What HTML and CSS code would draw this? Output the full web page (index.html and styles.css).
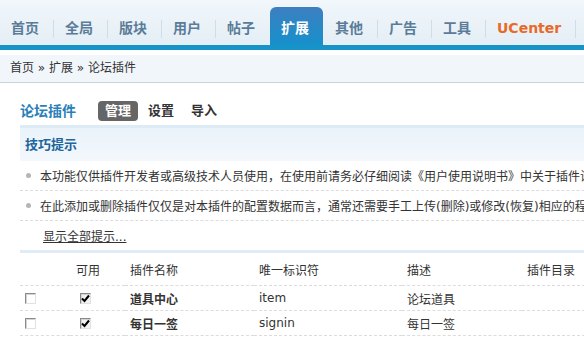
FILE: index.html
```html
<!DOCTYPE html>
<html lang="zh-CN">
<head>
    <meta charset="UTF-8">
    <meta name="viewport" content="width=device-width, initial-scale=1.0">
    <title>论坛插件</title>
    <link rel="stylesheet" href="styles.css">
</head>
<body>
    <div class="header">
        <ul class="nav">
            <li><a href="#">首页</a></li>
            <li><a href="#">全局</a></li>
            <li><a href="#">版块</a></li>
            <li><a href="#">用户</a></li>
            <li><a href="#">帖子</a></li>
            <li class="on"><a href="#">扩展</a></li>
            <li><a href="#">其他</a></li>
            <li><a href="#">广告</a></li>
            <li><a href="#">工具</a></li>
            <li class="uc"><a href="#">UCenter</a></li>
        </ul>
    </div>

    <div class="crumb">首页 » 扩展 » 论坛插件</div>

    <div class="main">
        <div class="title-row">
            <h3>论坛插件</h3>
            <ul class="subnav">
                <li class="current">管理</li>
                <li>设置</li>
                <li>导入</li>
            </ul>
        </div>

        <div class="tips">
            <div class="tips-head">技巧提示</div>
            <ul class="tips-list">
                <li><span class="dot"></span>本功能仅供插件开发者或高级技术人员使用，在使用前请务必仔细阅读《用户使用说明书》中关于插件设计的相关内容。</li>
                <li><span class="dot"></span>在此添加或删除插件仅仅是对本插件的配置数据而言，通常还需要手工上传(删除)或修改(恢复)相应的程序文件和数据结构，请仔细阅读插件的安装说明。</li>
                <li class="more"><a href="#">显示全部提示...</a></li>
            </ul>
        </div>

        <table class="plugins">
            <tr class="head">
                <th class="c-del"></th>
                <th class="c-on">可用</th>
                <th class="c-name">插件名称</th>
                <th class="c-id">唯一标识符</th>
                <th class="c-desc">描述</th>
                <th class="c-dir">插件目录</th>
            </tr>
            <tr>
                <td class="c-del"><span class="cb"></span></td>
                <td class="c-on"><span class="cb checked"><svg width="9" height="9" viewBox="0 0 9 9"><path d="M1 4.5 L3.5 7 L8 1.5" fill="none" stroke="#000" stroke-width="2"/></svg></span></td>
                <td class="c-name"><b>道具中心</b></td>
                <td class="c-id">item</td>
                <td class="c-desc">论坛道具</td>
                <td class="c-dir"></td>
            </tr>
            <tr>
                <td class="c-del"><span class="cb"></span></td>
                <td class="c-on"><span class="cb checked"><svg width="9" height="9" viewBox="0 0 9 9"><path d="M1 4.5 L3.5 7 L8 1.5" fill="none" stroke="#000" stroke-width="2"/></svg></span></td>
                <td class="c-name"><b>每日一签</b></td>
                <td class="c-id">signin</td>
                <td class="c-desc">每日一签</td>
                <td class="c-dir"></td>
            </tr>
        </table>
    </div>
</body>
</html>
```

FILE: styles.css
```css
html, body {
    margin: 0;
    overflow: hidden;
}
body {
    font-family: "DejaVu Sans", "Noto Sans CJK SC", sans-serif;
    font-size: 12px;
    color: #333;
    background: #fff;
}
.header {
    height: 45px;
    background: linear-gradient(#f1f7fb, #e4eef5);
    border-bottom: 5px solid #1694c8;
}
.nav {
    list-style: none;
    margin: 0;
    padding: 7px 0 0;
    display: flex;
    white-space: nowrap;
}
.nav li {
    padding-right: 1px;
    background: linear-gradient(#d0dde7, #d0dde7) right 13px / 1px 18px no-repeat;
}
.nav li:has(+ li.on) {
    background: none;
}
.nav a {
    display: block;
    height: 38px;
    line-height: 42px;
    padding: 0 14px 0 11px;
    font-size: 14px;
    font-weight: bold;
    color: #5a7c98;
    text-decoration: none;
}
.nav li.on {
    background: none;
}
.nav li.on a {
    color: #fff;
    background: linear-gradient(#3d7fc0, #1790cc);
    border-radius: 6px 6px 0 0;
}
.nav li.uc a {
    color: #e8692a;
}
.crumb {
    margin-top: 5px;
    height: 27px;
    line-height: 27px;
    padding-left: 10px;
    background: #f1f6fa;
    border-bottom: 1px solid #c9d3da;
}
.main {
    width: 760px;
    padding-left: 20px;
}
.title-row {
    display: flex;
    align-items: center;
    padding: 18px 0 4px;
}
.title-row h3 {
    margin: 0 22px 0 0;
    font-size: 14px;
    line-height: 20px;
    color: #2a7fb8;
}
.subnav {
    list-style: none;
    margin: 0;
    padding: 0;
    display: flex;
    gap: 3px;
}
.subnav li {
    width: 40px;
    height: 20px;
    line-height: 20px;
    text-align: center;
    font-size: 13px;
    font-weight: bold;
    color: #333;
    border-radius: 4px;
}
.subnav li.current {
    background: #666;
    color: #fff;
}
.tips-head {
    height: 33px;
    line-height: 33px;
    padding-left: 5px;
    border-top: 3px solid #dcebf6;
    background: linear-gradient(#eaf3fa, #f3f8fc);
    font-size: 13px;
    font-weight: bold;
    color: #22649c;
}
.tips-list {
    list-style: none;
    margin: 0;
    padding: 0;
}
.tips-list li {
    display: flex;
    align-items: center;
    height: 29px;
    white-space: nowrap;
    border-bottom: 1px dashed #dcdcdc;
}
.tips-list li.more {
    border-bottom: none;
    padding-left: 23px;
}
.tips-list a {
    color: #333;
}
.dot {
    width: 5px;
    height: 5px;
    margin: 0 9px 0 6px;
    border-radius: 50%;
    background: #b5b5b5;
    flex: none;
}
.plugins {
    width: 100%;
    border-collapse: collapse;
    table-layout: fixed;
    border-top: 3px solid #e1edf6;
}
.plugins th, .plugins td {
    padding: 0 0 0 5px;
    text-align: left;
    font-weight: normal;
    border-bottom: 1px dashed #dcdcdc;
    white-space: nowrap;
}
.plugins tr.head th {
    height: 32px;
}
.plugins td {
    height: 24px;
}
.c-del { width: 45px; }
.c-on { width: 49px; }
.plugins .c-on { padding-left: 6px; }
.c-name { width: 124px; }
.c-id { width: 143px; }
.c-desc { width: 115px; }
.cb {
    display: inline-block;
    vertical-align: middle;
    width: 9px;
    height: 9px;
    border: 1px solid;
    border-color: #8a8a8a #e2e2e2 #e2e2e2 #8a8a8a;
    box-shadow: inset 1px 1px 0 #d4d4d4;
    background: #fff;
    position: relative;
}
.c-on .cb {
    margin-left: 4px;
}
.cb.checked {
    background: #f2f2f2;
}
.cb svg {
    display: block;
    margin: 0;
}
```
